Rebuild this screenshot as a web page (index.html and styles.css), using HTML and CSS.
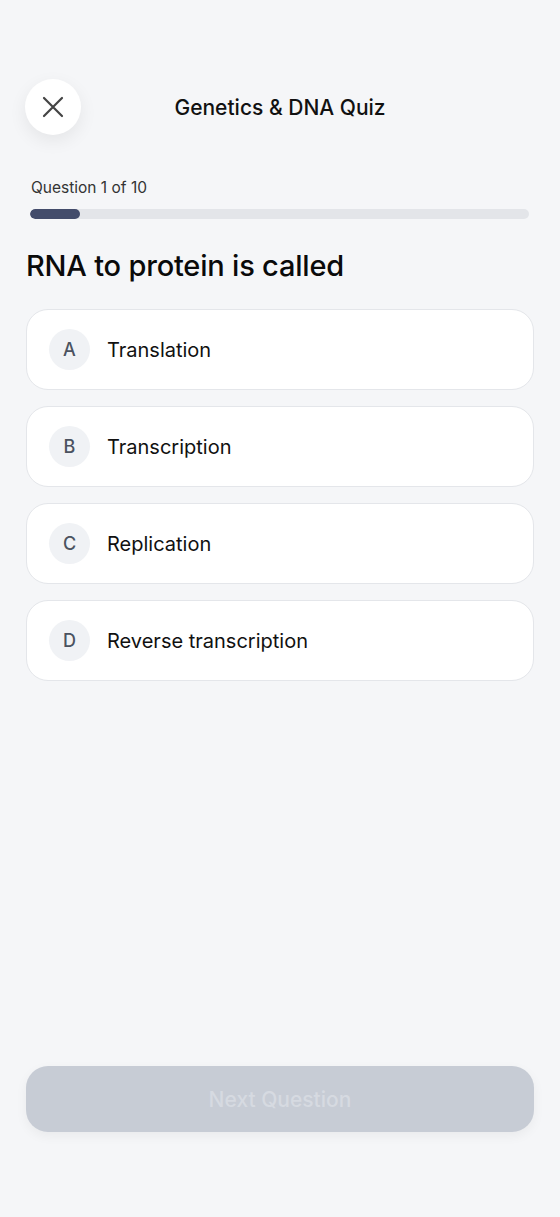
FILE: index.html
```html
<!DOCTYPE html>
<html lang="en">
<head>
  <meta charset="UTF-8" />
  <meta name="viewport" content="width=device-width, initial-scale=1.0"/>
  <title>Genetics &amp; DNA Quiz</title>
  <link rel="stylesheet" href="styles.css">
</head>
<body>
  <div class="screen">
    <div class="header">
      <button class="close-btn" aria-label="Close">
        <svg width="24" height="24" viewBox="0 0 24 24" fill="none" stroke="#444" stroke-width="2.2" stroke-linecap="round">
          <path d="M3 3L21 21M21 3L3 21"/>
        </svg>
      </button>
      <h1 class="title">Genetics &amp; DNA Quiz</h1>
    </div>

    <div class="progress-label">Question 1 of 10</div>
    <div class="progress"><div class="progress-fill" style="width:10%"></div></div>

    <h2 class="question">RNA to protein is called</h2>

    <div class="options">
      <div class="option"><span class="letter">A</span><span class="answer">Translation</span></div>
      <div class="option"><span class="letter">B</span><span class="answer">Transcription</span></div>
      <div class="option"><span class="letter">C</span><span class="answer">Replication</span></div>
      <div class="option"><span class="letter">D</span><span class="answer">Reverse transcription</span></div>
    </div>

    <div class="footer">
      <button class="next-btn" disabled>Next Question</button>
    </div>
  </div>
</body>
</html>
```

FILE: styles.css
```css
* {
  box-sizing: border-box;
}
html, body {
  margin: 0;
  height: 100%;
}
body {
  font-family: Inter, "Noto Sans", Arial, sans-serif;
  background: #f5f6f8;
  color: #111;
}
.screen {
  height: 1217px;
  padding: 79px 26px 0;
  display: flex;
  flex-direction: column;
}
.header {
  position: relative;
  height: 56px;
  display: flex;
  align-items: center;
  justify-content: center;
}
.close-btn {
  position: absolute;
  left: -1px;
  top: 0;
  width: 56px;
  height: 56px;
  border-radius: 50%;
  border: none;
  background: #fff;
  box-shadow: 0 6px 18px rgba(0,0,0,0.07);
  display: flex;
  align-items: center;
  justify-content: center;
  padding: 0;
}
.title {
  margin: 0;
  font-size: 21px;
  font-weight: 500;
  color: #111;
}
.progress-label {
  margin-top: 43px;
  margin-left: 5px;
  font-size: 15.5px;
  color: #333;
}
.progress {
  margin: 12px 5px 0 4px;
  height: 10px;
  border-radius: 5px;
  background: #e3e5e9;
  overflow: hidden;
}
.progress-fill {
  height: 100%;
  border-radius: 5px;
  background: #434c6b;
}
.question {
  margin: 29px 0 0;
  font-size: 29px;
  font-weight: 500;
  color: #0a0a0a;
  letter-spacing: -0.2px;
}
.options {
  margin-top: 26px;
  display: flex;
  flex-direction: column;
  gap: 16px;
}
.option {
  height: 81px;
  background: #fff;
  border: 1px solid #e4e6ea;
  border-radius: 22px;
  display: flex;
  align-items: center;
  padding-left: 22px;
}
.letter {
  width: 41px;
  height: 41px;
  border-radius: 50%;
  background: #f0f2f5;
  color: #4b5260;
  font-size: 18px;
  font-weight: 500;
  display: flex;
  align-items: center;
  justify-content: center;
}
.answer {
  margin-left: 17px;
  font-size: 20px;
  color: #111;
}
.footer {
  margin-top: auto;
  padding-bottom: 85px;
}
.next-btn {
  width: 100%;
  height: 66px;
  border: none;
  border-radius: 22px;
  background: #c7ccd5;
  color: #d6dae1;
  font-family: inherit;
  font-size: 21px;
  font-weight: 500;
  box-shadow: 0 4px 12px rgba(0,0,0,0.05);
}
```
